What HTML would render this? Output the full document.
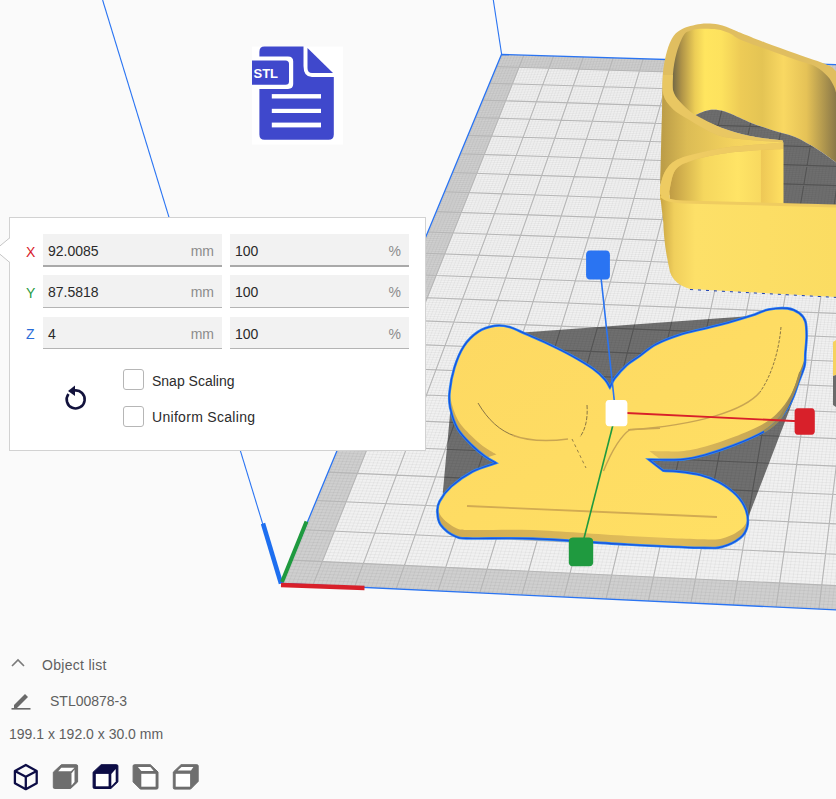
<!DOCTYPE html>
<html><head><meta charset="utf-8"><style>
html,body{margin:0;padding:0;}
body{width:836px;height:799px;overflow:hidden;background:#fafafa;position:relative;font-family:"Liberation Sans",sans-serif;}
#scene{position:absolute;left:0;top:0;}
.abs{position:absolute;}
#panel{position:absolute;left:9px;top:217px;width:415px;height:232px;background:#fff;border:1px solid #d2d2d2;}
.fld{position:absolute;background:#f2f2f2;border-bottom:1px solid #b4b4b4;}
.val{position:absolute;left:5px;top:9px;font-size:14px;color:#2a2a2a;}
.unit{position:absolute;right:8px;top:9px;font-size:14px;color:#8c8c8c;}
.lab{position:absolute;left:16px;font-size:14px;}
.cb{position:absolute;left:113px;width:19px;height:19px;border:1px solid #b6b6b6;border-radius:3px;background:#fff;}
.cbt{position:absolute;left:142px;font-size:14px;color:#2c2c2c;}
.ui{position:absolute;font-size:14px;color:#5f5f5f;}
</style></head><body>
<svg id="scene" width="836" height="799" viewBox="0 0 836 799">
<g id="plate"><polygon points="501.5,54.5 1215.1,76.3 1286.1,631.4 281.9,583.5" fill="#cfcfcf"/><polygon points="519,67.3 1193.2,88.2 1250.4,605.1 322.3,561.5" fill="#f1f1f1"/><path d="M503,54.6L284,583.6M501.2,55.3L1215.2,77.1M506,54.7L288.2,583.7M500.5,56.9L1215.4,78.8M508.9,54.7L292.3,583.9M499.8,58.5L1215.6,80.5M511.9,54.8L296.4,584.1M499.2,60.2L1215.9,82.2M514.9,54.9L300.6,584.3M498.5,61.8L1216.1,83.8M517.8,55L304.7,584.5M497.8,63.4L1216.3,85.5M520.8,55.1L308.9,584.7M497.1,65L1216.5,87.2M523.8,55.2L313,584.9M496.5,66.6L1216.7,88.9M526.8,55.3L317.2,585.1M495.8,68.3L1216.9,90.6M529.7,55.4L321.3,585.3M495.1,69.9L1217.2,92.3M532.7,55.5L325.5,585.5M494.4,71.6L1217.4,94M535.7,55.6L329.6,585.7M493.7,73.2L1217.6,95.8M538.7,55.6L333.8,585.9M493.1,74.9L1217.8,97.5M541.6,55.7L337.9,586.1M492.4,76.5L1218,99.2M544.6,55.8L342.1,586.3M491.7,78.2L1218.3,100.9M547.6,55.9L346.2,586.5M491,79.8L1218.5,102.6M550.6,56L350.4,586.7M490.3,81.5L1218.7,104.4M553.5,56.1L354.6,586.9M489.6,83.2L1218.9,106.1M556.5,56.2L358.7,587.1M488.9,84.9L1219.1,107.9M559.5,56.3L362.9,587.3M488.2,86.5L1219.4,109.6M562.5,56.4L367,587.5M487.5,88.2L1219.6,111.4M565.5,56.5L371.2,587.7M486.8,89.9L1219.8,113.1M568.4,56.6L375.4,587.9M486.1,91.6L1220,114.9M571.4,56.7L379.5,588.1M485.4,93.3L1220.3,116.7M574.4,56.7L383.7,588.3M484.7,95L1220.5,118.4M577.4,56.8L387.9,588.5M484,96.7L1220.7,120.2M580.4,56.9L392,588.7M483.3,98.4L1221,122M583.4,57L396.2,588.9M482.6,100.1L1221.2,123.8M586.3,57.1L400.4,589.1M481.9,101.9L1221.4,125.6M589.3,57.2L404.5,589.3M481.1,103.6L1221.6,127.4M592.3,57.3L408.7,589.5M480.4,105.3L1221.9,129.2M595.3,57.4L412.9,589.7M479.7,107L1222.1,131M598.3,57.5L417.1,589.9M479,108.8L1222.3,132.8M601.3,57.6L421.2,590.1M478.3,110.5L1222.6,134.6M604.3,57.7L425.4,590.3M477.5,112.3L1222.8,136.4M607.3,57.7L429.6,590.5M476.8,114L1223,138.2M610.2,57.8L433.8,590.7M476.1,115.8L1223.3,140.1M613.2,57.9L438,590.9M475.3,117.5L1223.5,141.9M616.2,58L442.1,591.1M474.6,119.3L1223.7,143.7M619.2,58.1L446.3,591.3M473.9,121.1L1224,145.6M622.2,58.2L450.5,591.5M473.1,122.8L1224.2,147.4M625.2,58.3L454.7,591.7M472.4,124.6L1224.4,149.3M628.2,58.4L458.9,591.9M471.7,126.4L1224.7,151.1M631.2,58.5L463.1,592.1M470.9,128.2L1224.9,153M634.2,58.6L467.3,592.3M470.2,130L1225.2,154.9M637.2,58.7L471.4,592.5M469.4,131.8L1225.4,156.7M640.2,58.7L475.6,592.7M468.7,133.6L1225.6,158.6M643.2,58.8L479.8,592.9M467.9,135.4L1225.9,160.5M646.2,58.9L484,593.1M467.2,137.2L1226.1,162.4M649.2,59L488.2,593.3M466.4,139L1226.4,164.3M652.2,59.1L492.4,593.5M465.7,140.8L1226.6,166.2M655.2,59.2L496.6,593.7M464.9,142.6L1226.8,168.1M658.2,59.3L500.8,593.9M464.2,144.5L1227.1,170M661.2,59.4L505,594.1M463.4,146.3L1227.3,171.9M664.2,59.5L509.2,594.3M462.6,148.1L1227.6,173.8M667.2,59.6L513.4,594.5M461.9,150L1227.8,175.7M670.2,59.7L517.6,594.7M461.1,151.8L1228.1,177.6M673.2,59.8L521.8,594.9M460.3,153.7L1228.3,179.6M676.2,59.8L526,595.1M459.6,155.5L1228.6,181.5M679.2,59.9L530.2,595.3M458.8,157.4L1228.8,183.5M682.2,60L534.4,595.5M458,159.3L1229.1,185.4M685.2,60.1L538.6,595.7M457.2,161.1L1229.3,187.4M688.2,60.2L542.8,595.9M456.5,163L1229.6,189.3M691.2,60.3L547.1,596.1M455.7,164.9L1229.8,191.3M694.2,60.4L551.3,596.3M454.9,166.8L1230.1,193.3M697.2,60.5L555.5,596.5M454.1,168.7L1230.3,195.2M700.2,60.6L559.7,596.7M453.3,170.6L1230.6,197.2M703.2,60.7L563.9,596.9M452.5,172.5L1230.8,199.2M706.2,60.8L568.1,597.1M451.7,174.4L1231.1,201.2M709.2,60.9L572.3,597.3M451,176.3L1231.3,203.2M712.2,60.9L576.6,597.5M450.2,178.2L1231.6,205.2M715.2,61L580.8,597.7M449.4,180.1L1231.9,207.2M718.2,61.1L585,597.9M448.6,182.1L1232.1,209.2M721.3,61.2L589.2,598.1M447.8,184L1232.4,211.2M724.3,61.3L593.4,598.3M447,185.9L1232.6,213.3M727.3,61.4L597.7,598.5M446.1,187.9L1232.9,215.3M730.3,61.5L601.9,598.7M445.3,189.8L1233.2,217.3M733.3,61.6L606.1,598.9M444.5,191.8L1233.4,219.4M736.3,61.7L610.3,599.1M443.7,193.7L1233.7,221.4M739.3,61.8L614.6,599.3M442.9,195.7L1233.9,223.5M742.3,61.9L618.8,599.5M442.1,197.7L1234.2,225.5M745.4,62L623,599.7M441.3,199.6L1234.5,227.6M748.4,62.1L627.3,599.9M440.4,201.6L1234.7,229.7M751.4,62.1L631.5,600.1M439.6,203.6L1235,231.7M754.4,62.2L635.7,600.3M438.8,205.6L1235.3,233.8M757.4,62.3L640,600.5M438,207.6L1235.5,235.9M760.4,62.4L644.2,600.7M437.1,209.6L1235.8,238M763.5,62.5L648.4,600.9M436.3,211.6L1236.1,240.1M766.5,62.6L652.7,601.2M435.5,213.6L1236.3,242.2M769.5,62.7L656.9,601.4M434.6,215.6L1236.6,244.3M772.5,62.8L661.1,601.6M433.8,217.7L1236.9,246.4M775.5,62.9L665.4,601.8M432.9,219.7L1237.1,248.6M778.6,63L669.6,602M432.1,221.7L1237.4,250.7M781.6,63.1L673.9,602.2M431.2,223.8L1237.7,252.8M784.6,63.2L678.1,602.4M430.4,225.8L1238,255M787.6,63.3L682.4,602.6M429.5,227.9L1238.2,257.1M790.7,63.3L686.6,602.8M428.7,229.9L1238.5,259.3M793.7,63.4L690.9,603M427.8,232L1238.8,261.4M796.7,63.5L695.1,603.2M427,234.1L1239.1,263.6M799.7,63.6L699.4,603.4M426.1,236.1L1239.4,265.8M802.8,63.7L703.6,603.6M425.2,238.2L1239.6,267.9M805.8,63.8L707.9,603.8M424.4,240.3L1239.9,270.1M808.8,63.9L712.1,604M423.5,242.4L1240.2,272.3M811.8,64L716.4,604.2M422.6,244.5L1240.5,274.5M814.9,64.1L720.6,604.4M421.8,246.6L1240.8,276.7M817.9,64.2L724.9,604.6M420.9,248.7L1241,278.9M820.9,64.3L729.2,604.8M420,250.8L1241.3,281.1M824,64.4L733.4,605M419.1,253L1241.6,283.4M827,64.5L737.7,605.2M418.2,255.1L1241.9,285.6M830,64.5L741.9,605.4M417.4,257.2L1242.2,287.8M833,64.6L746.2,605.6M416.5,259.4L1242.5,290.1M836.1,64.7L750.5,605.8M415.6,261.5L1242.8,292.3M839.1,64.8L754.7,606M414.7,263.7L1243,294.6M842.1,64.9L759,606.2M413.8,265.8L1243.3,296.8M845.2,65L763.3,606.4M412.9,268L1243.6,299.1M848.2,65.1L767.5,606.6M412,270.2L1243.9,301.4M851.3,65.2L771.8,606.8M411.1,272.3L1244.2,303.7M854.3,65.3L776.1,607M410.2,274.5L1244.5,305.9M857.3,65.4L780.3,607.2M409.3,276.7L1244.8,308.2M860.4,65.5L784.6,607.5M408.4,278.9L1245.1,310.5M863.4,65.6L788.9,607.7M407.4,281.1L1245.4,312.9M866.4,65.7L793.2,607.9M406.5,283.3L1245.7,315.2M869.5,65.8L797.5,608.1M405.6,285.5L1246,317.5M872.5,65.8L801.7,608.3M404.7,287.8L1246.3,319.8M875.6,65.9L806,608.5M403.8,290L1246.6,322.2M878.6,66L810.3,608.7M402.8,292.2L1246.9,324.5M881.6,66.1L814.6,608.9M401.9,294.5L1247.2,326.9M884.7,66.2L818.9,609.1M401,296.7L1247.5,329.2M887.7,66.3L823.1,609.3M400,299L1247.8,331.6M890.8,66.4L827.4,609.5M399.1,301.2L1248.1,333.9M893.8,66.5L831.7,609.7M398.2,303.5L1248.4,336.3M896.9,66.6L836,609.9M397.2,305.8L1248.7,338.7M899.9,66.7L840.3,610.1M396.3,308.1L1249,341.1M902.9,66.8L844.6,610.3M395.3,310.3L1249.3,343.5M906,66.9L848.9,610.5M394.4,312.6L1249.6,345.9M909,67L853.2,610.7M393.4,314.9L1249.9,348.3M912.1,67.1L857.5,610.9M392.4,317.2L1250.2,350.7M915.1,67.1L861.7,611.1M391.5,319.6L1250.5,353.2M918.2,67.2L866,611.3M390.5,321.9L1250.9,355.6M921.2,67.3L870.3,611.5M389.6,324.2L1251.2,358.1M924.3,67.4L874.6,611.7M388.6,326.5L1251.5,360.5M927.3,67.5L878.9,612M387.6,328.9L1251.8,363M930.4,67.6L883.2,612.2M386.6,331.2L1252.1,365.4M933.4,67.7L887.5,612.4M385.7,333.6L1252.4,367.9M936.5,67.8L891.8,612.6M384.7,336L1252.7,370.4M939.5,67.9L896.1,612.8M383.7,338.3L1253.1,372.9M942.6,68L900.5,613M382.7,340.7L1253.4,375.4M945.6,68.1L904.8,613.2M381.7,343.1L1253.7,377.9M948.7,68.2L909.1,613.4M380.7,345.5L1254,380.4M951.7,68.3L913.4,613.6M379.7,347.9L1254.3,382.9M954.8,68.4L917.7,613.8M378.7,350.3L1254.7,385.4M957.9,68.4L922,614M377.7,352.7L1255,388M960.9,68.5L926.3,614.2M376.7,355.1L1255.3,390.5M964,68.6L930.6,614.4M375.7,357.5L1255.6,393.1M967,68.7L934.9,614.6M374.7,360L1256,395.6M970.1,68.8L939.3,614.8M373.7,362.4L1256.3,398.2M973.1,68.9L943.6,615M372.7,364.9L1256.6,400.8M976.2,69L947.9,615.2M371.7,367.3L1257,403.3M979.3,69.1L952.2,615.5M370.6,369.8L1257.3,405.9M982.3,69.2L956.5,615.7M369.6,372.3L1257.6,408.5M985.4,69.3L960.9,615.9M368.6,374.7L1258,411.1M988.4,69.4L965.2,616.1M367.5,377.2L1258.3,413.8M991.5,69.5L969.5,616.3M366.5,379.7L1258.6,416.4M994.6,69.6L973.8,616.5M365.5,382.2L1259,419M997.6,69.7L978.1,616.7M364.4,384.7L1259.3,421.6M1000.7,69.8L982.5,616.9M363.4,387.3L1259.6,424.3M1003.8,69.9L986.8,617.1M362.3,389.8L1260,427M1006.8,69.9L991.1,617.3M361.3,392.3L1260.3,429.6M1009.9,70L995.5,617.5M360.2,394.9L1260.7,432.3M1013,70.1L999.8,617.7M359.2,397.4L1261,435M1016,70.2L1004.1,617.9M358.1,400L1261.4,437.7M1019.1,70.3L1008.5,618.1M357,402.5L1261.7,440.4M1022.2,70.4L1012.8,618.3M356,405.1L1262,443.1M1025.2,70.5L1017.1,618.6M354.9,407.7L1262.4,445.8M1028.3,70.6L1021.5,618.8M353.8,410.3L1262.7,448.5M1031.4,70.7L1025.8,619M352.8,412.9L1263.1,451.2M1034.4,70.8L1030.2,619.2M351.7,415.5L1263.4,454M1037.5,70.9L1034.5,619.4M350.6,418.1L1263.8,456.7M1040.6,71L1038.8,619.6M349.5,420.7L1264.1,459.5M1043.7,71.1L1043.2,619.8M348.4,423.3L1264.5,462.3M1046.7,71.2L1047.5,620M347.3,426L1264.9,465.1M1049.8,71.3L1051.9,620.2M346.2,428.6L1265.2,467.8M1052.9,71.4L1056.2,620.4M345.1,431.3L1265.6,470.6M1056,71.4L1060.6,620.6M344,433.9L1265.9,473.4M1059,71.5L1064.9,620.8M342.9,436.6L1266.3,476.3M1062.1,71.6L1069.3,621M341.8,439.3L1266.7,479.1M1065.2,71.7L1073.6,621.2M340.7,442L1267,481.9M1068.3,71.8L1078,621.5M339.6,444.7L1267.4,484.8M1071.3,71.9L1082.3,621.7M338.4,447.4L1267.7,487.6M1074.4,72L1086.7,621.9M337.3,450.1L1268.1,490.5M1077.5,72.1L1091,622.1M336.2,452.8L1268.5,493.3M1080.6,72.2L1095.4,622.3M335,455.5L1268.8,496.2M1083.7,72.3L1099.8,622.5M333.9,458.3L1269.2,499.1M1086.7,72.4L1104.1,622.7M332.8,461L1269.6,502M1089.8,72.5L1108.5,622.9M331.6,463.8L1270,504.9M1092.9,72.6L1112.9,623.1M330.5,466.6L1270.3,507.8M1096,72.7L1117.2,623.3M329.3,469.3L1270.7,510.8M1099.1,72.8L1121.6,623.5M328.2,472.1L1271.1,513.7M1102.1,72.9L1125.9,623.7M327,474.9L1271.5,516.6M1105.2,72.9L1130.3,624M325.8,477.7L1271.8,519.6M1108.3,73L1134.7,624.2M324.7,480.5L1272.2,522.6M1111.4,73.1L1139.1,624.4M323.5,483.3L1272.6,525.5M1114.5,73.2L1143.4,624.6M322.3,486.2L1273,528.5M1117.6,73.3L1147.8,624.8M321.1,489L1273.4,531.5M1120.7,73.4L1152.2,625M320,491.9L1273.8,534.5M1123.7,73.5L1156.5,625.2M318.8,494.7L1274.1,537.6M1126.8,73.6L1160.9,625.4M317.6,497.6L1274.5,540.6M1129.9,73.7L1165.3,625.6M316.4,500.5L1274.9,543.6M1133,73.8L1169.7,625.8M315.2,503.4L1275.3,546.7M1136.1,73.9L1174.1,626M314,506.2L1275.7,549.7M1139.2,74L1178.4,626.3M312.8,509.2L1276.1,552.8M1142.3,74.1L1182.8,626.5M311.6,512.1L1276.5,555.9M1145.4,74.2L1187.2,626.7M310.4,515L1276.9,559M1148.5,74.3L1191.6,626.9M309.1,517.9L1277.3,562.1M1151.6,74.4L1196,627.1M307.9,520.9L1277.7,565.2M1154.7,74.5L1200.4,627.3M306.7,523.8L1278.1,568.3M1157.7,74.6L1204.8,627.5M305.5,526.8L1278.5,571.4M1160.8,74.6L1209.1,627.7M304.2,529.8L1278.9,574.6M1163.9,74.7L1213.5,627.9M303,532.7L1279.3,577.7M1167,74.8L1217.9,628.1M301.7,535.7L1279.7,580.9M1170.1,74.9L1222.3,628.3M300.5,538.7L1280.1,584.1M1173.2,75L1226.7,628.6M299.3,541.8L1280.5,587.3M1176.3,75.1L1231.1,628.8M298,544.8L1280.9,590.5M1179.4,75.2L1235.5,629M296.7,547.8L1281.3,593.7M1182.5,75.3L1239.9,629.2M295.5,550.9L1281.7,596.9M1185.6,75.4L1244.3,629.4M294.2,553.9L1282.1,600.1M1188.7,75.5L1248.7,629.6M292.9,557L1282.6,603.4M1191.8,75.6L1253.1,629.8M291.7,560.1L1283,606.6M1194.9,75.7L1257.5,630M290.4,563.1L1283.4,609.9M1198,75.8L1261.9,630.2M289.1,566.2L1283.8,613.2M1201.1,75.9L1266.3,630.4M287.8,569.3L1284.2,616.5M1204.2,76L1270.7,630.7M286.5,572.5L1284.7,619.8M1207.3,76.1L1275.1,630.9M285.2,575.6L1285.1,623.1M1210.4,76.2L1279.5,631.1M283.9,578.7L1285.5,626.4M1213.6,76.3L1283.9,631.3M282.6,581.9L1285.9,629.7" stroke="#000" stroke-opacity="0.05" stroke-width="0.8" fill="none"/><path d="M523.8,55.2L313,584.9M496.5,66.6L1216.7,88.9M553.5,56.1L354.6,586.9M489.6,83.2L1218.9,106.1M583.4,57L396.2,588.9M482.6,100.1L1221.2,123.8M613.2,57.9L438,590.9M475.3,117.5L1223.5,141.9M643.2,58.8L479.8,592.9M467.9,135.4L1225.9,160.5M673.2,59.8L521.8,594.9M460.3,153.7L1228.3,179.6M703.2,60.7L563.9,596.9M452.5,172.5L1230.8,199.2M733.3,61.6L606.1,598.9M444.5,191.8L1233.4,219.4M763.5,62.5L648.4,600.9M436.3,211.6L1236.1,240.1M793.7,63.4L690.9,603M427.8,232L1238.8,261.4M824,64.4L733.4,605M419.1,253L1241.6,283.4M854.3,65.3L776.1,607M410.2,274.5L1244.5,305.9M884.7,66.2L818.9,609.1M401,296.7L1247.5,329.2M915.1,67.1L861.7,611.1M391.5,319.6L1250.5,353.2M945.6,68.1L904.8,613.2M381.7,343.1L1253.7,377.9M976.2,69L947.9,615.2M371.7,367.3L1257,403.3M1006.8,69.9L991.1,617.3M361.3,392.3L1260.3,429.6M1037.5,70.9L1034.5,619.4M350.6,418.1L1263.8,456.7M1068.3,71.8L1078,621.5M339.6,444.7L1267.4,484.8M1099.1,72.8L1121.6,623.5M328.2,472.1L1271.1,513.7M1129.9,73.7L1165.3,625.6M316.4,500.5L1274.9,543.6M1160.8,74.6L1209.1,627.7M304.2,529.8L1278.9,574.6M1191.8,75.6L1253.1,629.8M291.7,560.1L1283,606.6" stroke="#b6b6b6" stroke-width="1.1" fill="none"/></g>
<path d="M1215.1,76.3L501.5,54.5L281.9,583.5" stroke="#2a74f2" stroke-width="1.3" fill="none"/>
<path d="M281.9,583.5L1286.1,631.4" stroke="#2a74f2" stroke-width="1.3" fill="none"/>
<line x1="102.6" y1="0" x2="281" y2="583.7" stroke="#2a74f2" stroke-width="1.1"/>
<line x1="493.3" y1="0" x2="501.6" y2="54.1" stroke="#2a74f2" stroke-width="1.1"/>
<polygon points="470,340 526.1,332.3 740.8,316.7 790,312 803,340 801,372 792.3,402.6 749.8,513.2 745,535 445,530 442.8,492.8 450.2,411.9 455,380" fill="#000" fill-opacity="0.54"/>
<defs><clipPath id="bfc"><path d="M496,463 C494.2,461.9 489.2,459.4 485.3,456.6 C481.4,453.8 477.2,450.6 472.6,446 C468,441.4 461.4,435.3 457.7,428.9 C454,422.5 451.5,413.9 450.2,407.7 C448.9,401.5 448.9,398.3 449.6,391.6 C450.3,384.9 452,375.2 454.4,367.6 C456.8,360 459.9,352.1 463.9,346.1 C467.9,340.1 473.1,335.1 478.3,331.7 C483.5,328.3 489.8,326.6 495,325.8 C500.2,325 504.2,325.6 509.4,327 C514.6,328.4 519.7,331.3 526.1,334.1 C532.5,336.9 540.1,340.1 547.7,343.7 C555.3,347.3 564,351.5 571.6,355.7 C579.2,359.9 587.5,364.8 593.1,368.8 C598.7,372.8 602.2,376.5 605,379.6 C607.8,382.7 609.1,386.2 609.9,387.5 C610.7,386 611.8,382.1 614.6,378.4 C617.4,374.7 622.4,369 626.6,365.2 C630.8,361.4 635.1,359.2 640,355.7 C644.9,352.2 649.3,347.8 655.9,344.3 C662.5,340.8 671.8,337.3 679.8,334.7 C687.8,332.1 695.7,330.7 703.7,328.7 C711.7,326.7 719.7,324.9 727.7,322.7 C735.7,320.5 744.8,317.8 751.6,315.6 C758.4,313.4 762.3,310.8 768.3,309.6 C774.3,308.4 782.3,307.8 787.5,308.4 C792.7,309 796.4,311 799.4,313.2 C802.4,315.4 804.2,317.7 805.4,321.5 C806.6,325.3 806.6,330.7 806.6,335.9 C806.6,341.1 805.8,347.6 805.4,352.6 C805,357.6 805.6,361.3 804.5,366 C803.4,370.7 801.1,375.3 799,381 C796.9,386.7 795,394 792,400 C789,406 785.6,411.8 781,417 C776.4,422.2 772.1,426.8 764.2,431.5 C756.3,436.2 743.7,441.4 733.8,445.3 C723.9,449.2 713.3,452.6 704.9,455 C696.5,457.4 690.9,458.6 683.4,459.4 C675.9,460.2 665.8,459.8 660,459.8 C654.2,459.8 650.8,459.6 648.9,459.6 C651.3,461.5 660.9,468.9 663.3,470.8 C665.9,470.9 672.8,470.9 679,471.6 C685.2,472.3 693.9,473.3 700.6,475.1 C707.3,476.9 713.2,479 719.2,482.3 C725.2,485.6 732,490.5 736.5,495.2 C741,499.9 744.4,505.4 746.2,510.6 C748,515.8 748.2,521.9 747.3,526.4 C746.3,530.9 744.6,534.3 740.5,537.7 C736.4,541.1 729.2,545 722.5,546.7 C715.8,548.4 715.9,548.2 700,547.8 C684.1,547.4 655.3,546 627.4,544.5 C599.5,543 558.4,539.6 532.6,538.6 C506.8,537.6 485.5,538.9 472.6,538.5 C459.8,538.1 460.8,538.7 455.5,536.4 C450.2,534.1 443.6,528.8 440.6,524.7 C437.6,520.6 437.6,515.8 437.4,511.9 C437.2,508 437.3,505.6 439.6,501.3 C441.9,497.1 445.8,491.4 451.3,486.4 C456.8,481.4 465.2,475.4 472.6,471.5 C480.1,467.6 492.1,464.4 496,463Z"/></clipPath><linearGradient id="bftop" x1="0" y1="0" x2="1" y2="1"><stop offset="0" stop-color="#fdd862"/><stop offset="1" stop-color="#ffe064"/></linearGradient><linearGradient id="bfside" x1="440" x2="810" y1="0" y2="0" gradientUnits="userSpaceOnUse"><stop offset="0" stop-color="#cfab52"/><stop offset="0.6" stop-color="#e2be5a"/><stop offset="0.85" stop-color="#c9a855"/><stop offset="1" stop-color="#948250"/></linearGradient></defs>
<path d="M496,463 C494.2,461.9 489.2,459.4 485.3,456.6 C481.4,453.8 477.2,450.6 472.6,446 C468,441.4 461.4,435.3 457.7,428.9 C454,422.5 451.5,413.9 450.2,407.7 C448.9,401.5 448.9,398.3 449.6,391.6 C450.3,384.9 452,375.2 454.4,367.6 C456.8,360 459.9,352.1 463.9,346.1 C467.9,340.1 473.1,335.1 478.3,331.7 C483.5,328.3 489.8,326.6 495,325.8 C500.2,325 504.2,325.6 509.4,327 C514.6,328.4 519.7,331.3 526.1,334.1 C532.5,336.9 540.1,340.1 547.7,343.7 C555.3,347.3 564,351.5 571.6,355.7 C579.2,359.9 587.5,364.8 593.1,368.8 C598.7,372.8 602.2,376.5 605,379.6 C607.8,382.7 609.1,386.2 609.9,387.5 C610.7,386 611.8,382.1 614.6,378.4 C617.4,374.7 622.4,369 626.6,365.2 C630.8,361.4 635.1,359.2 640,355.7 C644.9,352.2 649.3,347.8 655.9,344.3 C662.5,340.8 671.8,337.3 679.8,334.7 C687.8,332.1 695.7,330.7 703.7,328.7 C711.7,326.7 719.7,324.9 727.7,322.7 C735.7,320.5 744.8,317.8 751.6,315.6 C758.4,313.4 762.3,310.8 768.3,309.6 C774.3,308.4 782.3,307.8 787.5,308.4 C792.7,309 796.4,311 799.4,313.2 C802.4,315.4 804.2,317.7 805.4,321.5 C806.6,325.3 806.6,330.7 806.6,335.9 C806.6,341.1 805.8,347.6 805.4,352.6 C805,357.6 805.6,361.3 804.5,366 C803.4,370.7 801.1,375.3 799,381 C796.9,386.7 795,394 792,400 C789,406 785.6,411.8 781,417 C776.4,422.2 772.1,426.8 764.2,431.5 C756.3,436.2 743.7,441.4 733.8,445.3 C723.9,449.2 713.3,452.6 704.9,455 C696.5,457.4 690.9,458.6 683.4,459.4 C675.9,460.2 665.8,459.8 660,459.8 C654.2,459.8 650.8,459.6 648.9,459.6 C651.3,461.5 660.9,468.9 663.3,470.8 C665.9,470.9 672.8,470.9 679,471.6 C685.2,472.3 693.9,473.3 700.6,475.1 C707.3,476.9 713.2,479 719.2,482.3 C725.2,485.6 732,490.5 736.5,495.2 C741,499.9 744.4,505.4 746.2,510.6 C748,515.8 748.2,521.9 747.3,526.4 C746.3,530.9 744.6,534.3 740.5,537.7 C736.4,541.1 729.2,545 722.5,546.7 C715.8,548.4 715.9,548.2 700,547.8 C684.1,547.4 655.3,546 627.4,544.5 C599.5,543 558.4,539.6 532.6,538.6 C506.8,537.6 485.5,538.9 472.6,538.5 C459.8,538.1 460.8,538.7 455.5,536.4 C450.2,534.1 443.6,528.8 440.6,524.7 C437.6,520.6 437.6,515.8 437.4,511.9 C437.2,508 437.3,505.6 439.6,501.3 C441.9,497.1 445.8,491.4 451.3,486.4 C456.8,481.4 465.2,475.4 472.6,471.5 C480.1,467.6 492.1,464.4 496,463Z" fill="url(#bfside)"/>
<g clip-path="url(#bfc)"><path d="M496,463 C494.2,461.9 489.2,459.4 485.3,456.6 C481.4,453.8 477.2,450.6 472.6,446 C468,441.4 461.4,435.3 457.7,428.9 C454,422.5 451.5,413.9 450.2,407.7 C448.9,401.5 448.9,398.3 449.6,391.6 C450.3,384.9 452,375.2 454.4,367.6 C456.8,360 459.9,352.1 463.9,346.1 C467.9,340.1 473.1,335.1 478.3,331.7 C483.5,328.3 489.8,326.6 495,325.8 C500.2,325 504.2,325.6 509.4,327 C514.6,328.4 519.7,331.3 526.1,334.1 C532.5,336.9 540.1,340.1 547.7,343.7 C555.3,347.3 564,351.5 571.6,355.7 C579.2,359.9 587.5,364.8 593.1,368.8 C598.7,372.8 602.2,376.5 605,379.6 C607.8,382.7 609.1,386.2 609.9,387.5 C610.7,386 611.8,382.1 614.6,378.4 C617.4,374.7 622.4,369 626.6,365.2 C630.8,361.4 635.1,359.2 640,355.7 C644.9,352.2 649.3,347.8 655.9,344.3 C662.5,340.8 671.8,337.3 679.8,334.7 C687.8,332.1 695.7,330.7 703.7,328.7 C711.7,326.7 719.7,324.9 727.7,322.7 C735.7,320.5 744.8,317.8 751.6,315.6 C758.4,313.4 762.3,310.8 768.3,309.6 C774.3,308.4 782.3,307.8 787.5,308.4 C792.7,309 796.4,311 799.4,313.2 C802.4,315.4 804.2,317.7 805.4,321.5 C806.6,325.3 806.6,330.7 806.6,335.9 C806.6,341.1 805.8,347.6 805.4,352.6 C805,357.6 805.6,361.3 804.5,366 C803.4,370.7 801.1,375.3 799,381 C796.9,386.7 795,394 792,400 C789,406 785.6,411.8 781,417 C776.4,422.2 772.1,426.8 764.2,431.5 C756.3,436.2 743.7,441.4 733.8,445.3 C723.9,449.2 713.3,452.6 704.9,455 C696.5,457.4 690.9,458.6 683.4,459.4 C675.9,460.2 665.8,459.8 660,459.8 C654.2,459.8 650.8,459.6 648.9,459.6 C651.3,461.5 660.9,468.9 663.3,470.8 C665.9,470.9 672.8,470.9 679,471.6 C685.2,472.3 693.9,473.3 700.6,475.1 C707.3,476.9 713.2,479 719.2,482.3 C725.2,485.6 732,490.5 736.5,495.2 C741,499.9 744.4,505.4 746.2,510.6 C748,515.8 748.2,521.9 747.3,526.4 C746.3,530.9 744.6,534.3 740.5,537.7 C736.4,541.1 729.2,545 722.5,546.7 C715.8,548.4 715.9,548.2 700,547.8 C684.1,547.4 655.3,546 627.4,544.5 C599.5,543 558.4,539.6 532.6,538.6 C506.8,537.6 485.5,538.9 472.6,538.5 C459.8,538.1 460.8,538.7 455.5,536.4 C450.2,534.1 443.6,528.8 440.6,524.7 C437.6,520.6 437.6,515.8 437.4,511.9 C437.2,508 437.3,505.6 439.6,501.3 C441.9,497.1 445.8,491.4 451.3,486.4 C456.8,481.4 465.2,475.4 472.6,471.5 C480.1,467.6 492.1,464.4 496,463Z" transform="translate(0.5,-8.5)" fill="url(#bftop)"/></g>
<path d="M478,403 C488,420 500,431 515,436" stroke="#7d6a40" stroke-width="0.9" fill="none"/>
<path d="M512,435 C525,440 545,442 568,439" stroke="#c9a552" stroke-width="1.6" fill="none"/>
<path d="M587,405 C588,420 585,430 580,437" stroke="#7d6a40" stroke-width="0.9" fill="none" stroke-dasharray="4 1.5"/>
<path d="M572,439 L586,468" stroke="#7d6a40" stroke-width="0.8" fill="none" stroke-dasharray="3 3"/>
<path d="M603.5,471 C610,455 618,438 630,429.5 L660,428.3" stroke="#c9a552" stroke-width="1.5" fill="none"/>
<path d="M781,327 C779,350 772,375 760,392" stroke="#7d6a40" stroke-width="0.9" fill="none" stroke-dasharray="3 1.5"/>
<path d="M760,392 C745,410 700,425 628,430" stroke="#c9a552" stroke-width="1.5" fill="none"/>
<path d="M467,506 L717,517" stroke="#d2ab52" stroke-width="1.8" fill="none"/>
<path d="M496,463 C494.2,461.9 489.2,459.4 485.3,456.6 C481.4,453.8 477.2,450.6 472.6,446 C468,441.4 461.4,435.3 457.7,428.9 C454,422.5 451.5,413.9 450.2,407.7 C448.9,401.5 448.9,398.3 449.6,391.6 C450.3,384.9 452,375.2 454.4,367.6 C456.8,360 459.9,352.1 463.9,346.1 C467.9,340.1 473.1,335.1 478.3,331.7 C483.5,328.3 489.8,326.6 495,325.8 C500.2,325 504.2,325.6 509.4,327 C514.6,328.4 519.7,331.3 526.1,334.1 C532.5,336.9 540.1,340.1 547.7,343.7 C555.3,347.3 564,351.5 571.6,355.7 C579.2,359.9 587.5,364.8 593.1,368.8 C598.7,372.8 602.2,376.5 605,379.6 C607.8,382.7 609.1,386.2 609.9,387.5 C610.7,386 611.8,382.1 614.6,378.4 C617.4,374.7 622.4,369 626.6,365.2 C630.8,361.4 635.1,359.2 640,355.7 C644.9,352.2 649.3,347.8 655.9,344.3 C662.5,340.8 671.8,337.3 679.8,334.7 C687.8,332.1 695.7,330.7 703.7,328.7 C711.7,326.7 719.7,324.9 727.7,322.7 C735.7,320.5 744.8,317.8 751.6,315.6 C758.4,313.4 762.3,310.8 768.3,309.6 C774.3,308.4 782.3,307.8 787.5,308.4 C792.7,309 796.4,311 799.4,313.2 C802.4,315.4 804.2,317.7 805.4,321.5 C806.6,325.3 806.6,330.7 806.6,335.9 C806.6,341.1 805.8,347.6 805.4,352.6 C805,357.6 805.6,361.3 804.5,366 C803.4,370.7 801.1,375.3 799,381 C796.9,386.7 795,394 792,400 C789,406 785.6,411.8 781,417 C776.4,422.2 772.1,426.8 764.2,431.5 C756.3,436.2 743.7,441.4 733.8,445.3 C723.9,449.2 713.3,452.6 704.9,455 C696.5,457.4 690.9,458.6 683.4,459.4 C675.9,460.2 665.8,459.8 660,459.8 C654.2,459.8 650.8,459.6 648.9,459.6 C651.3,461.5 660.9,468.9 663.3,470.8 C665.9,470.9 672.8,470.9 679,471.6 C685.2,472.3 693.9,473.3 700.6,475.1 C707.3,476.9 713.2,479 719.2,482.3 C725.2,485.6 732,490.5 736.5,495.2 C741,499.9 744.4,505.4 746.2,510.6 C748,515.8 748.2,521.9 747.3,526.4 C746.3,530.9 744.6,534.3 740.5,537.7 C736.4,541.1 729.2,545 722.5,546.7 C715.8,548.4 715.9,548.2 700,547.8 C684.1,547.4 655.3,546 627.4,544.5 C599.5,543 558.4,539.6 532.6,538.6 C506.8,537.6 485.5,538.9 472.6,538.5 C459.8,538.1 460.8,538.7 455.5,536.4 C450.2,534.1 443.6,528.8 440.6,524.7 C437.6,520.6 437.6,515.8 437.4,511.9 C437.2,508 437.3,505.6 439.6,501.3 C441.9,497.1 445.8,491.4 451.3,486.4 C456.8,481.4 465.2,475.4 472.6,471.5 C480.1,467.6 492.1,464.4 496,463Z" fill="none" stroke="#2a86f6" stroke-width="2.6"/>
<path d="M496,463 C494.2,461.9 489.2,459.4 485.3,456.6 C481.4,453.8 477.2,450.6 472.6,446 C468,441.4 461.4,435.3 457.7,428.9 C454,422.5 451.5,413.9 450.2,407.7 C448.9,401.5 448.9,398.3 449.6,391.6 C450.3,384.9 452,375.2 454.4,367.6 C456.8,360 459.9,352.1 463.9,346.1 C467.9,340.1 473.1,335.1 478.3,331.7 C483.5,328.3 489.8,326.6 495,325.8 C500.2,325 504.2,325.6 509.4,327 C514.6,328.4 519.7,331.3 526.1,334.1 C532.5,336.9 540.1,340.1 547.7,343.7 C555.3,347.3 564,351.5 571.6,355.7 C579.2,359.9 587.5,364.8 593.1,368.8 C598.7,372.8 602.2,376.5 605,379.6 C607.8,382.7 609.1,386.2 609.9,387.5 C610.7,386 611.8,382.1 614.6,378.4 C617.4,374.7 622.4,369 626.6,365.2 C630.8,361.4 635.1,359.2 640,355.7 C644.9,352.2 649.3,347.8 655.9,344.3 C662.5,340.8 671.8,337.3 679.8,334.7 C687.8,332.1 695.7,330.7 703.7,328.7 C711.7,326.7 719.7,324.9 727.7,322.7 C735.7,320.5 744.8,317.8 751.6,315.6 C758.4,313.4 762.3,310.8 768.3,309.6 C774.3,308.4 782.3,307.8 787.5,308.4 C792.7,309 796.4,311 799.4,313.2 C802.4,315.4 804.2,317.7 805.4,321.5 C806.6,325.3 806.6,330.7 806.6,335.9 C806.6,341.1 805.8,347.6 805.4,352.6 C805,357.6 805.6,361.3 804.5,366 C803.4,370.7 801.1,375.3 799,381 C796.9,386.7 795,394 792,400 C789,406 785.6,411.8 781,417 C776.4,422.2 772.1,426.8 764.2,431.5 C756.3,436.2 743.7,441.4 733.8,445.3 C723.9,449.2 713.3,452.6 704.9,455 C696.5,457.4 690.9,458.6 683.4,459.4 C675.9,460.2 665.8,459.8 660,459.8 C654.2,459.8 650.8,459.6 648.9,459.6 C651.3,461.5 660.9,468.9 663.3,470.8 C665.9,470.9 672.8,470.9 679,471.6 C685.2,472.3 693.9,473.3 700.6,475.1 C707.3,476.9 713.2,479 719.2,482.3 C725.2,485.6 732,490.5 736.5,495.2 C741,499.9 744.4,505.4 746.2,510.6 C748,515.8 748.2,521.9 747.3,526.4 C746.3,530.9 744.6,534.3 740.5,537.7 C736.4,541.1 729.2,545 722.5,546.7 C715.8,548.4 715.9,548.2 700,547.8 C684.1,547.4 655.3,546 627.4,544.5 C599.5,543 558.4,539.6 532.6,538.6 C506.8,537.6 485.5,538.9 472.6,538.5 C459.8,538.1 460.8,538.7 455.5,536.4 C450.2,534.1 443.6,528.8 440.6,524.7 C437.6,520.6 437.6,515.8 437.4,511.9 C437.2,508 437.3,505.6 439.6,501.3 C441.9,497.1 445.8,491.4 451.3,486.4 C456.8,481.4 465.2,475.4 472.6,471.5 C480.1,467.6 492.1,464.4 496,463Z" fill="none" stroke="#1a50da" stroke-width="1.1"/>
<path d="M800.5,372 C797,385 792,400 781,417 C775,425 770,428 764,431.5" fill="none" stroke="#9c8a54" stroke-width="2.6"/>
<defs><linearGradient id="rinner" x1="672" x2="836" y1="0" y2="0" gradientUnits="userSpaceOnUse"><stop offset="0" stop-color="#6e6545"/><stop offset="0.06" stop-color="#b09448"/><stop offset="0.14" stop-color="#eccd56"/><stop offset="0.2" stop-color="#ffe55f"/><stop offset="0.3" stop-color="#fde25e"/><stop offset="0.42" stop-color="#edcb56"/><stop offset="0.55" stop-color="#e4c454"/><stop offset="0.68" stop-color="#f9d862"/><stop offset="0.82" stop-color="#e5c257"/><stop offset="1" stop-color="#8a7848"/></linearGradient><linearGradient id="router" x1="663" x2="783" y1="0" y2="0" gradientUnits="userSpaceOnUse"><stop offset="0" stop-color="#bd9e48"/><stop offset="0.2" stop-color="#dcbc55"/><stop offset="0.6" stop-color="#f4d35e"/><stop offset="1" stop-color="#fadb64"/></linearGradient><linearGradient id="rlow" x1="670" x2="783" y1="0" y2="0" gradientUnits="userSpaceOnUse"><stop offset="0" stop-color="#c09c44"/><stop offset="0.3" stop-color="#f5d75e"/><stop offset="0.6" stop-color="#ffe466"/><stop offset="0.8" stop-color="#f8d960"/><stop offset="0.81" stop-color="#eec856"/><stop offset="1" stop-color="#ffe062"/></linearGradient><linearGradient id="rfront" x1="660" x2="836" y1="0" y2="0" gradientUnits="userSpaceOnUse"><stop offset="0" stop-color="#c8a444"/><stop offset="0.08" stop-color="#f0cf5c"/><stop offset="0.2" stop-color="#fde068"/><stop offset="1" stop-color="#fbdc62"/></linearGradient></defs>
<path d="M661,195 L662.2,100 C662.3,95.8 662.2,82.2 662.8,74.8 C663.4,67.4 664.3,61.7 665.8,55.7 C667.3,49.7 669.1,43.3 671.7,38.9 C674.3,34.5 676.5,31.9 681.3,29.4 C686.1,26.9 694.3,24.8 700.5,24 C706.7,23.2 713,23.7 718.4,24.6 C723.8,25.5 729.2,28.1 732.8,29.4 C736.4,30.7 734.6,30.3 740,32.5 C745.4,34.7 755.6,39 765,42.5 C774.4,46 785.9,50 796.3,53.8 C806.7,57.5 821,62.1 827.6,65 C834.2,67.9 834.6,70.2 836,71.3 L836,195 Z" fill="#e0be60"/>
<path d="M672.9,100 C672.9,95.8 672.3,82.6 672.9,74.8 C673.5,67 674.7,59.9 676.5,53.3 C678.3,46.7 681.3,39.1 683.7,35.3 C686.1,31.5 688.1,31.7 690.9,30.6 C693.7,29.5 696.1,29 700.5,28.8 C704.9,28.6 712.4,28.7 717.2,29.4 C722,30.1 725.4,31.3 729.2,33 C733,34.7 734,36.8 740,39.4 C746,42 755.6,45.4 765,48.8 C774.4,52.2 788,57.1 796.3,60 C804.6,62.9 809.8,63.6 815,66.3 C820.2,69 824.5,73 827.6,76.3 C830.8,79.6 832.5,83.6 833.9,86.3 C835.3,89 835.6,91.5 836,92.6 L836,162.4 C832.8,160.2 823.7,153.3 816.9,149.1 C810.1,144.9 802.4,140.1 795,137 C787.6,133.9 780,132.8 772.3,130.3 C764.6,127.8 756.6,125 748.8,121.9 C741,118.8 732.1,113.8 725.4,111.8 C718.7,109.8 713.9,109.5 708.6,110.2 C703.3,110.9 696,115 693.5,116 L688.5,110.2 L678,100 Z" fill="url(#rinner)"/>
<clipPath id="floorclip"><path d="M693.5,116 C696,115 703.3,110.9 708.6,110.2 C713.9,109.5 718.7,109.8 725.4,111.8 C732.1,113.8 741,118.8 748.8,121.9 C756.6,125 764.6,127.8 772.3,130.3 C780,132.8 787.6,133.9 795,137 C802.4,140.1 810.1,144.9 816.9,149.1 C823.7,153.3 832.8,160.2 836,162.4 L836,207 L782,207 L782.3,141 L782.3,140.5 C776.9,139.8 760,138.1 750,136 C740,133.9 731.4,131.3 722,128 C712.6,124.7 698.2,118 693.5,116Z"/></clipPath>
<g clip-path="url(#floorclip)"><use href="#plate"/><rect x="660" y="100" width="176" height="110" fill="#000" fill-opacity="0.54"/></g>
<path d="M663,75 C663.1,78.3 662,89.5 663.5,95 C665,100.5 668.1,104.1 672,108 C675.9,111.9 679.4,114.1 687,118.6 C694.6,123.1 706.9,131.4 717.4,135 C727.9,138.6 739.1,138.8 750,140 C760.9,141.2 777.5,141.7 783,142 L783.5,142.5 C777.2,143 756.5,144.5 745.5,145.6 C734.5,146.7 728.3,146.9 717.4,149.1 C706.5,151.2 688.5,155 679.9,158.5 C671.3,162 669.1,165.5 665.8,170.2 C662.5,174.9 661,183.9 660,186.6 Z" fill="url(#router)"/>
<path d="M663,75 C663.1,78.3 662,89.5 663.5,95 C665,100.5 668.1,104.1 672,108 C675.9,111.9 679.4,114.1 687,118.6 C694.6,123.1 706.9,131.4 717.4,135 C727.9,138.6 739.1,138.8 750,140 C760.9,141.2 777.5,141.7 783,142 L783,140.5 C777.5,139.8 760.2,138.1 750,136 C739.8,133.9 731.3,131.7 722,128 C712.7,124.3 701,118.3 694,114 C687,109.7 683.5,106 680,102 C676.5,98 674.2,94.5 673,90 C671.8,85.5 673,77.5 673,75 Z" fill="#e9c762"/>
<path d="M669.3,191.3 C670.3,187.8 671.5,175.3 675.2,170.2 C678.9,165.1 683.8,163.5 691.6,160.8 C699.4,158.1 711.1,155.6 722,153.8 C732.9,152.1 747,151.1 757.2,150.3 C767.5,149.5 779.1,149.3 783.5,149.1 L783.5,204 L670,204 Z" fill="url(#rlow)"/>
<path d="M783.5,142.5 C777.2,143 756.5,144.5 745.5,145.6 C734.5,146.7 728.3,146.9 717.4,149.1 C706.5,151.2 688.5,155 679.9,158.5 C671.3,162 669.1,165.5 665.8,170.2 C662.5,174.9 661,183.9 660,186.6 L660,200 L670,200 L669.3,191.3 C670.3,187.8 671.5,175.3 675.2,170.2 C678.9,165.1 683.8,163.5 691.6,160.8 C699.4,158.1 711.1,155.6 722,153.8 C732.9,152.1 747,151.1 757.2,150.3 C767.5,149.5 779.1,149.3 783.5,149.1 Z" fill="#eecb62"/>
<path d="M660,194 C663,199 672,201.5 683.4,202 L836,206.5 L836,296.9 L690,289 C680,286 673,281 670,272 C666,255 663.5,235 663.4,223.4 Z" fill="url(#rfront)"/>
<path d="M661,196 C665,200 672,201.5 683.4,202 L836,206" stroke="#efcc60" stroke-width="3" fill="none"/>
<line x1="690" y1="289.5" x2="836" y2="297.4" stroke="#1c3fb0" stroke-width="1" stroke-dasharray="3 5"/>
<polygon points="833,342 836,340 836,375 833,376" fill="#f6d25e"/>
<polygon points="833,376 836,375 836,407 833,405" fill="#6b6b6b"/>
<line x1="600" y1="268" x2="615.5" y2="412" stroke="#2a74f2" stroke-width="1.6"/>
<line x1="616" y1="412.5" x2="804" y2="421.5" stroke="#d8202a" stroke-width="1.8"/>
<line x1="616" y1="413" x2="581" y2="550" stroke="#1f9a3f" stroke-width="1.6"/>
<path d="M590,250.5 L606,250.5 Q610.5,250.5 609.9,256.9 L609.9,273.1 Q610.5,279.5 606,279.5 L590,279.5 Q585.5,279.5 586.1,273.1 L586.1,256.9 Q585.5,250.5 590,250.5 Z" fill="#2a74f2"/>
<path d="M797.9,408.2 L811.5,408.2 Q815.3,408.2 814.8,414 L814.8,428.9 Q815.3,434.7 811.5,434.7 L797.9,434.7 Q794.1,434.7 794.6,428.9 L794.6,414 Q794.1,408.2 797.9,408.2 Z" fill="#d8202a"/>
<path d="M572.8,537.4 L589.2,537.4 Q593.8,537.4 593.2,543.7 L593.2,559.9 Q593.8,566.2 589.2,566.2 L572.8,566.2 Q568.2,566.2 568.8,559.9 L568.8,543.7 Q568.2,537.4 572.8,537.4 Z" fill="#1f9a3f"/>
<path d="M609.1,400 L623.9,400 Q628,400 627.4,405.8 L627.4,420.5 Q628,426.3 623.9,426.3 L609.1,426.3 Q605,426.3 605.6,420.5 L605.6,405.8 Q605,400 609.1,400 Z" fill="#fff"/>
<path d="M281,583.5 L263,523.5" stroke="#1e6ff0" stroke-width="4.5" stroke-linecap="butt"/>
<path d="M282,582 L306.5,521.5" stroke="#1f9a3f" stroke-width="4" />
<path d="M281,585 L364.5,588" stroke="#d8202a" stroke-width="4.5" />
</svg>
<!-- STL icon -->
<svg class="abs" style="left:0;top:0" width="836" height="200" viewBox="0 0 836 200">
<rect x="252" y="46.6" width="91" height="98" fill="#fff"/>
<path d="M264.5,46.6 L303.5,46.6 L303.5,66 Q303.5,77 312,77 L333.8,77 L333.8,134.5 Q333.8,139.8 328.5,139.8 L264.5,139.8 Q259.4,139.8 259.4,134.5 L259.4,52 Q259.4,46.6 264.5,46.6 Z" fill="#3f48cc"/>
<path d="M307.5,48 L333,73 L312,73 Q307.5,73 307.5,68 Z" fill="#3f48cc"/>
<path d="M252,56.5 L288,56.5 Q293.2,56.5 293.2,61.5 L293.2,84 Q293.2,88.9 288,88.9 L252,88.9 Z" fill="#fff"/>
<path d="M252,60.4 L285.5,60.4 Q289,60.4 289,64 L289,81.5 Q289,84.7 285.5,84.7 L252,84.7 Z" fill="#3f48cc"/>
<text x="253.5" y="77.8" font-family="Liberation Sans" font-weight="bold" font-size="13" fill="#fff">STL</text>
<rect x="271.8" y="94.1" width="49.2" height="4.4" fill="#fff"/>
<rect x="271.8" y="108.8" width="49.2" height="4.2" fill="#fff"/>
<rect x="271.8" y="122.6" width="49.2" height="4.8" fill="#fff"/>
</svg>
<div id="panel">
  <div class="lab" style="top:26px;color:#d8202a">X</div>
  <div class="lab" style="top:67px;color:#1f9a3f">Y</div>
  <div class="lab" style="top:108px;color:#2a6cd8">Z</div>
  <div class="fld" style="left:33px;top:16px;width:179px;height:31px;border-bottom:2px solid #a9a9a9"><span class="val">92.0085</span><span class="unit">mm</span></div>
  <div class="fld" style="left:220px;top:16px;width:179px;height:31px;border-bottom:2px solid #a9a9a9"><span class="val">100</span><span class="unit">%</span></div>
  <div class="fld" style="left:33px;top:57px;width:179px;height:32px"><span class="val">87.5818</span><span class="unit">mm</span></div>
  <div class="fld" style="left:220px;top:57px;width:179px;height:32px"><span class="val">100</span><span class="unit">%</span></div>
  <div class="fld" style="left:33px;top:99px;width:179px;height:31px"><span class="val">4</span><span class="unit">mm</span></div>
  <div class="fld" style="left:220px;top:99px;width:179px;height:31px"><span class="val">100</span><span class="unit">%</span></div>
  <div class="cb" style="top:151px"></div><div class="cbt" style="top:155px">Snap Scaling</div>
  <div class="cb" style="top:188px"></div><div class="cbt" style="top:191px;letter-spacing:0.3px">Uniform Scaling</div>
  <svg class="abs" style="left:50px;top:165px" width="30" height="30" viewBox="0 0 30 30">
    <path d="M8.5,11 A9,9 0 1 0 14.5,7.5" stroke="#12123c" stroke-width="2.6" fill="none"/>
    <path d="M15,2.5 L15,13 L8,8 Z" fill="#12123c"/>
  </svg>
</div>
<svg class="abs" style="left:0;top:236px" width="10" height="28" viewBox="0 0 10 28"><path d="M10.5,1.2 L-0.5,10.3 L-0.5,17.8 L10.5,27.1" fill="#fff" stroke="#c6c6c6" stroke-width="1"/></svg>
<!-- bottom ui -->
<svg class="abs" style="left:10px;top:657px" width="16" height="12" viewBox="0 0 16 12"><path d="M2,9 L8,3 L14,9" stroke="#7a7a7a" stroke-width="1.6" fill="none"/></svg>
<div class="ui" style="left:42px;top:657px;letter-spacing:0.3px">Object list</div>
<svg class="abs" style="left:10px;top:690px" width="22" height="22" viewBox="0 0 22 22"><path d="M4,15 L15,4 L18,7 L7,18 L4,18 Z" fill="#6a6a6a"/><rect x="1.5" y="18" width="19" height="1.6" fill="#6a6a6a"/></svg>
<div class="ui" style="left:50px;top:693px">STL00878-3</div>
<div class="ui" style="left:9px;top:726px">199.1 x 192.0 x 30.0 mm</div>
<svg class="abs" style="left:0;top:755px" width="210" height="44" viewBox="0 0 210 44">
  <g stroke="#0c0c45" stroke-width="2.3" fill="none" stroke-linejoin="round">
    <path d="M25.8,10 L36.7,16 L36.7,28.2 L25.8,34.2 L14.9,28.2 L14.9,16 Z"/>
    <path d="M14.9,16 L25.8,21.8 L36.7,16 M25.8,21.8 L25.8,34.2"/>
  </g>
  <g stroke-linejoin="round">
    <path d="M61.3,9.7 L76.3,9.7 Q77.6,9.7 77.6,11 L77.6,26.9 L70.6,33.5 L54.6,33.5 Q53.3,33.5 53.3,32.2 L53.3,17.2 Z" fill="#6e6e6e" stroke="#6e6e6e" stroke-width="1"/>
    <path d="M61.3,12.7 L74.5,12.7 L71,16.3 L58.2,16.3 Z" fill="#fff"/>
    <path d="M74.5,14.5 L74.5,26.9 L71.5,30.4 L71.5,18.5 Z" fill="#fff"/>
  </g>
  <g>
    <path d="M101.1,9.7 L116.6,9.7 Q117.9,9.7 117.9,11 L117.9,26.9 L110.9,33.5 L94.4,33.5 Q93.1,33.5 93.1,32.2 L93.1,17.2 Z" fill="#0c0c45" stroke="#0c0c45" stroke-width="1" stroke-linejoin="round"/>
    <path d="M95.8,18.9 L108.6,18.9 L108.6,31.3 L95.8,31.3 Z" fill="#fff"/>
    <path d="M111.3,18.9 L115.7,14.1 L115.7,26.5 L111.3,31.3 Z" fill="#fff"/>
  </g>
  <g stroke-linejoin="round">
    <path d="M134.4,9.7 L150.4,9.7 L158,17 L158,32.8 Q158,34.1 156.7,34.1 L140.3,34.1 L133.1,26.9 L133.1,11 Q133.1,9.7 134.4,9.7 Z" fill="#6e6e6e" stroke="#6e6e6e" stroke-width="1"/>
    <path d="M137.9,12.1 L150.4,12.1 L153.7,15.9 L141.3,15.9 Z" fill="#fff"/>
    <path d="M141.3,18.8 L155.6,18.8 L155.6,31.7 L141.3,31.7 Z" fill="#fff"/>
  </g>
  <g stroke-linejoin="round">
    <path d="M181,9.7 L196.9,9.7 Q198.2,9.7 198.2,11 L198.2,26.4 L190.6,34.1 L174.6,34.1 Q173.3,34.1 173.3,32.8 L173.3,17 Z" fill="#6e6e6e" stroke="#6e6e6e" stroke-width="1"/>
    <path d="M181.5,12.1 L193.4,12.1 L191,15.4 L177.6,15.4 Z" fill="#fff"/>
    <path d="M175.7,18.8 L190.1,18.8 L190.1,31.7 L175.7,31.7 Z" fill="#fff"/>
  </g>
</svg>
</body></html>
